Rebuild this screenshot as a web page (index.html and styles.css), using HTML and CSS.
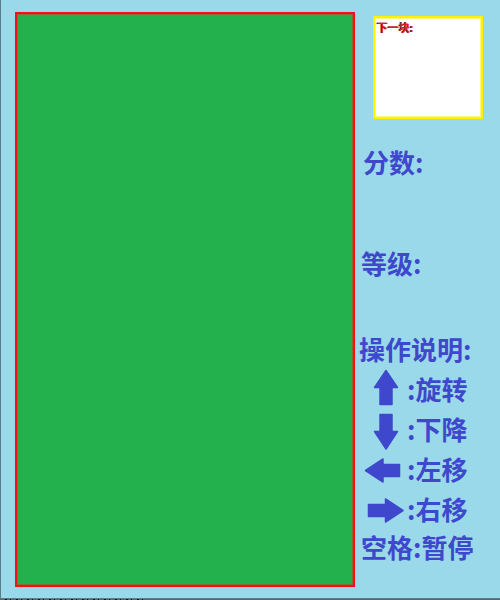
FILE: index.html
```html
<!DOCTYPE html>
<html lang="zh-CN">
<head>
<meta charset="utf-8">
<title>俄罗斯方块</title>
<link rel="stylesheet" href="styles.css">
</head>
<body>
<main class="game">
  <section class="board"></section>
  <aside class="side">
    <section class="next"><h2 class="next-title">下一块:</h2></section>
    <p class="label score">分数:</p>
    <p class="label level">等级:</p>
    <h2 class="label help">操作说明:</h2>
    <ul class="keys">
      <li class="key"><svg class="arrow" viewBox="0 0 44 40"><path d="M23 1.500 34.500 18.500H29V35.500H17V18.500H11.500Z"/></svg><span>:旋转</span></li>
      <li class="key"><svg class="arrow" viewBox="0 0 44 40"><path d="M17 5.500H29V22.500H34.500L23 40 11.500 22.500H17Z"/></svg><span>:下降</span></li>
      <li class="key"><svg class="arrow" viewBox="0 0 44 40"><path d="M2.500 21.500 20 10V15.500H36.500V27.500H20V33Z"/></svg><span>:左移</span></li>
      <li class="key"><svg class="arrow" viewBox="0 0 44 40"><path d="M40 21.500 22.500 10V15.500H5.500V27.500H22.500V33Z"/></svg><span>:右移</span></li>
    </ul>
    <p class="label pause">空格:暂停</p>
  </aside>
</main>
<div class="edge"></div>
</body>
</html>
```
FILE: styles.css
```css
* { box-sizing: border-box; }
body {
  margin: 0;
  min-height: 100vh;
  display: flex;
  flex-direction: column;
  background: #99d9ea;
  color: #3f48cc;
  font-family: "Noto Sans CJK SC", sans-serif;
}
.game {
  flex: 1;
  display: grid;
  grid-template-columns: 1fr 145px;
  padding: 12px 0 11px 14px;
  border-left: 1px solid #5a7c88;
}
.board {
  background: #22b14c;
  border: 2px solid #fb0d18;
  box-shadow: inset 0 0 0 1px #8a6a38;
}
.side { padding-top: 4px; }
.next {
  height: 103px;
  margin: 0 17px 23px 18px;
  padding: 1px 2px;
  background: #fff;
  border: 2px solid #fff200;
  box-shadow: inset 0 0 0 1px #fff67a;
}
.next-title {
  margin: 0;
  font-size: 11px;
  line-height: 16px;
  font-weight: 700;
  color: #ed1c24;
  text-shadow: -1px 0 #3a1216;
}
.label {
  margin: 0;
  font-size: 26px;
  line-height: 40px;
  font-weight: 700;
  white-space: nowrap;
}
.score { padding-left: 8px; }
.level { margin-top: 61px; padding-left: 6px; }
.help { margin-top: 46px; padding-left: 4px; }
.pause { padding-left: 6px; line-height: 36px; }
.keys {
  margin: 0;
  padding: 0 0 0 8px;
  list-style: none;
}
.key {
  display: flex;
  height: 40px;
  font-size: 26px;
  line-height: 40px;
  font-weight: 700;
  white-space: nowrap;
}
.arrow {
  width: 44px;
  height: 40px;
  overflow: visible;
  fill: #3f48cc;
  stroke: #3f48cc;
  stroke-width: 1.5;
  stroke-linejoin: round;
}
.edge {
  height: 2px;
  border-top: 1px solid #5a7c88;
  background: repeating-linear-gradient(90deg, #5a656b 0 5px, #15181a 5px 7px, #5a656b 7px 10px, #15181a 10px 11px) 0 0 / 145px 1px no-repeat #5a656b;
}
```
